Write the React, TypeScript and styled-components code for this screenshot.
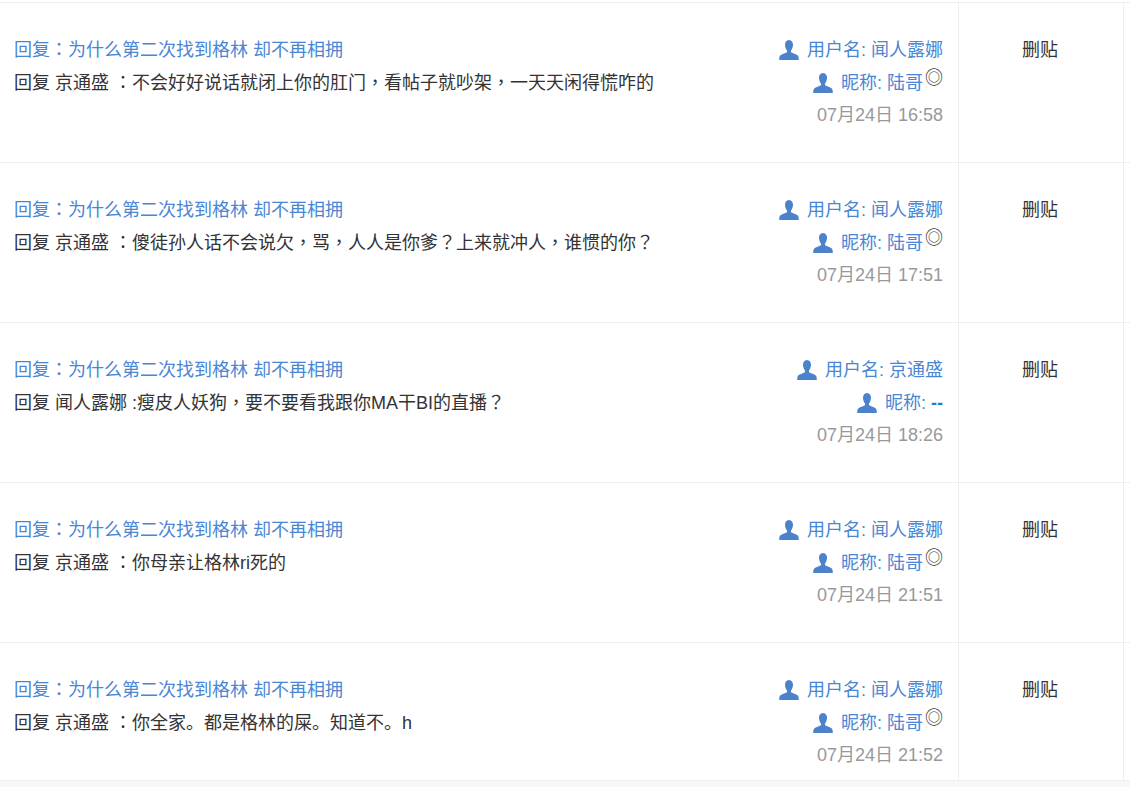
import React from 'react';
import styled, { createGlobalStyle } from 'styled-components';

const GlobalStyle = createGlobalStyle`
  html, body {
    margin: 0;
    padding: 0;
    background: #f7f7f7;
    overflow: hidden;
  }
  body {
    font-family: "Liberation Sans", "Noto Sans CJK SC", sans-serif;
    font-size: 18px;
    color: #333;
  }
`;

const List = styled.div`
  width: 1130px;
  height: 781px;
  padding-top: 2px;
  box-sizing: border-box;
  background: #fff;
  border-bottom: 1px solid #eee;
`;

const Row = styled.div<{ $last?: boolean }>`
  display: flex;
  height: ${props => (props.$last ? '138px' : '160px')};
  box-sizing: border-box;
  border-top: 1px solid #eee;
`;

const MainCell = styled.div`
  display: flex;
  justify-content: space-between;
  width: 959px;
  padding: 31px 15px 0 14px;
  box-sizing: border-box;
  border-right: 1px solid #eee;
`;

const ReplyText = styled.div`
  line-height: 33px;
`;

const ThreadLink = styled.div`
  color: #4a86d4;
`;

// centred full-width punctuation comes from the TC cut
const Punct = styled.span`
  font-family: "Noto Sans CJK TC", sans-serif;
  line-height: 0;
`;

const Meta = styled.div`
  display: flex;
  flex-direction: column;
  align-items: flex-end;
  line-height: 33px;
`;

const UserLine = styled.div`
  display: flex;
  align-items: center;
  color: #4a86d4;
`;

const UserIcon = styled.svg`
  width: 20px;
  height: 20px;
  margin: -2px 8px 0 0;
  fill: #4a82cc;
`;

const Mark = styled.span`
  color: #333;
  font-size: 18px;
  line-height: 18px;
  margin: -12px 0 0 2px;
`;

const NickEmpty = styled.span`
  color: #2a78d0;
  font-weight: bold;
`;

const Time = styled.div`
  margin-top: -1px;
  color: #999;
`;

const ActionCell = styled.div`
  width: 165px;
  padding: 31px 2px 0 0;
  box-sizing: border-box;
  border-right: 1px solid #eee;
  text-align: center;
  line-height: 33px;
  color: #333;
`;

const Person = () => (
  <UserIcon viewBox="0 0 20 20">
    <path d="M10 0c2.700 0 4 2.200 4 4.800 0 2.200-.8 4.300-1.800 5.400-.5.600-.4 1.800.3 2.200 1.900 1.100 5.500 1.600 6.500 3.300.6 1 .8 2.500.8 4.300H.2c0-1.800.2-3.300.8-4.300 1-1.700 4.600-2.200 6.500-3.300.7-.4.8-1.600.3-2.200C6.800 9.100 6 7 6 4.800 6 2.200 7.300 0 10 0z" />
  </UserIcon>
);

const withPunct = (text: string) =>
  text.split(/([：，？])/).map((part, i) =>
    /^[：，？]$/.test(part) ? <Punct key={i}>{part}</Punct> : part
  );

type Reply = {
  target: string;
  body: string;
  user: string;
  nick?: string;
  time: string;
};

const replies: Reply[] = [
  { target: '京通盛 ', body: '：不会好好说话就闭上你的肛门，看帖子就吵架，一天天闲得慌咋的', user: '闻人露娜', nick: '陆哥', time: '07月24日 16:58' },
  { target: '京通盛 ', body: '：傻徒孙人话不会说欠，骂，人人是你爹？上来就冲人，谁惯的你？', user: '闻人露娜', nick: '陆哥', time: '07月24日 17:51' },
  { target: '闻人露娜 ', body: ':瘦皮人妖狗，要不要看我跟你MA干BI的直播？', user: '京通盛', time: '07月24日 18:26' },
  { target: '京通盛 ', body: '：你母亲让格林ri死的', user: '闻人露娜', nick: '陆哥', time: '07月24日 21:51' },
  { target: '京通盛 ', body: '：你全家。都是格林的屎。知道不。h', user: '闻人露娜', nick: '陆哥', time: '07月24日 21:52' },
];

const App: React.FC = () => {
  return (
    <>
      <GlobalStyle />
      <List>
        {replies.map((reply, index) => (
          <Row key={reply.time} $last={index === replies.length - 1}>
            <MainCell>
              <ReplyText>
                <ThreadLink>{withPunct('回复：为什么第二次找到格林 却不再相拥')}</ThreadLink>
                <div>回复 {reply.target}{withPunct(reply.body)}</div>
              </ReplyText>
              <Meta>
                <UserLine>
                  <Person />
                  用户名: {reply.user}
                </UserLine>
                <UserLine>
                  <Person />
                  昵称:&nbsp;
                  {reply.nick ? (
                    <>
                      {reply.nick}
                      <Mark>◎</Mark>
                    </>
                  ) : (
                    <NickEmpty>--</NickEmpty>
                  )}
                </UserLine>
                <Time>{reply.time}</Time>
              </Meta>
            </MainCell>
            <ActionCell>删贴</ActionCell>
          </Row>
        ))}
      </List>
    </>
  );
};

export default App;
